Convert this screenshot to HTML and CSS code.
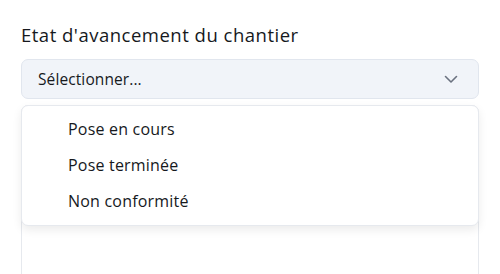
FILE: index.html
```html
<html>
<head>
<title>Etat d'avancement</title>
<link rel="stylesheet" href="styles.css">
</head>
<body>
<div class="form">
<label class="label">Etat d'avancement du chantier</label>
<div class="select">
<span>Sélectionner...</span>
<svg class="chevron" width="14" height="9" viewBox="0 0 14 9"><path d="M1.5 1.5 L7 7 L12.5 1.5" fill="none" stroke="#6b7280" stroke-width="1.6" stroke-linecap="round" stroke-linejoin="round"/></svg>
</div>
<div class="below">
<div class="field"></div>
<ul class="menu">
<li>Pose en cours</li>
<li>Pose terminée</li>
<li>Non conformité</li>
</ul>
</div>
</div>
</body>
</html>
```

FILE: styles.css
```css
body {
	margin: 0;
	background: #ffffff;
	font-family: "Open Sans", "Liberation Sans", sans-serif;
	color: #16191d;
}
.form {
	padding: 22px 21px 0 21px;
	width: 458px;
}
.label {
	display: block;
	font-size: 18.5px;
	letter-spacing: 0.5px;
	line-height: 26px;
	margin-bottom: 11px;
}
.select {
	height: 38px;
	border: 1px solid #e1e6ee;
	border-radius: 7px;
	background: #f1f4f9;
	display: flex;
	align-items: center;
	justify-content: space-between;
	padding: 0 20px 0 16px;
	font-size: 15.5px;
	letter-spacing: 0.1px;
}
.below {
	position: relative;
	margin-top: 6px;
}
.field {
	height: 180px;
	border: 1px solid #e6e9ee;
	border-radius: 7px;
}
.menu {
	position: absolute;
	top: 0;
	left: 0;
	right: 0;
	margin: 0;
	padding: 5px 0 6px 0;
	list-style: none;
	background: #ffffff;
	border: 1px solid #e6e9ee;
	border-radius: 7px;
	box-shadow: 0 4px 10px rgba(0, 0, 0, 0.08);
}
.menu li {
	padding-left: 46px;
	height: 36px;
	line-height: 36px;
	font-size: 16px;
	letter-spacing: 0.2px;
}
```
